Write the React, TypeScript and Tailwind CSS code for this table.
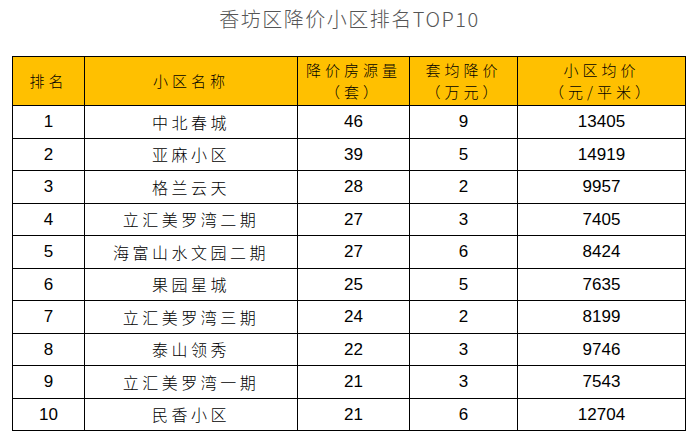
import React from "react";

const rows: [string, string, string, string, string][] = [
  ["1", "中北春城", "46", "9", "13405"],
  ["2", "亚麻小区", "39", "5", "14919"],
  ["3", "格兰云天", "28", "2", "9957"],
  ["4", "立汇美罗湾二期", "27", "3", "7405"],
  ["5", "海富山水文园二期", "27", "6", "8424"],
  ["6", "果园星城", "25", "5", "7635"],
  ["7", "立汇美罗湾三期", "24", "2", "8199"],
  ["8", "泰山领秀", "22", "3", "9746"],
  ["9", "立汇美罗湾一期", "21", "3", "7543"],
  ["10", "民香小区", "21", "6", "12704"],
];

const cjk = "font-['Noto_Sans_CJK_SC',sans-serif]";
const num = "font-['Liberation_Sans',Arial,sans-serif]";
const th = `border border-black font-light p-0 text-[15px] leading-[22px] tracking-[4px] ${cjk}`;

export default function App() {
  return (
    <div className="w-[697px] h-[440px] bg-white overflow-hidden">
      <div className={`h-[38px] flex items-center justify-center pl-[2px] text-[20px] leading-none font-light text-[#555555] tracking-[1.5px] ${cjk}`}>
        香坊区降价小区排名TOP10
      </div>
      <table className="ml-[12px] mt-[18px] w-[673px] border-collapse table-fixed text-black">
        <colgroup>
          <col className="w-[72px]" />
          <col className="w-[213px]" />
          <col className="w-[112px]" />
          <col className="w-[108px]" />
          <col className="w-[168px]" />
        </colgroup>
        <thead>
          <tr className="h-[49px] bg-[#FFC000]">
            <th className={th}>排名</th>
            <th className={th}>小区名称</th>
            <th className={th}>
              降价房源量<br />（套）
            </th>
            <th className={th}>
              套均降价<br />（万元）
            </th>
            <th className={th}>
              小区均价<br />（元/平米）
            </th>
          </tr>
        </thead>
        <tbody>
          {rows.map((r) => (
            <tr key={r[0]} className="h-[32.5px]">
              <td className={`border border-black text-center text-[17px] p-0 ${num}`}>{r[0]}</td>
              <td className={`border border-black text-center text-[16px] font-light p-0 tracking-[3.5px] ${cjk}`}>{r[1]}</td>
              <td className={`border border-black text-center text-[17px] p-0 ${num}`}>{r[2]}</td>
              <td className={`border border-black text-center text-[17px] p-0 ${num}`}>{r[3]}</td>
              <td className={`border border-black text-center text-[17px] p-0 ${num}`}>{r[4]}</td>
            </tr>
          ))}
        </tbody>
      </table>
    </div>
  );
}
